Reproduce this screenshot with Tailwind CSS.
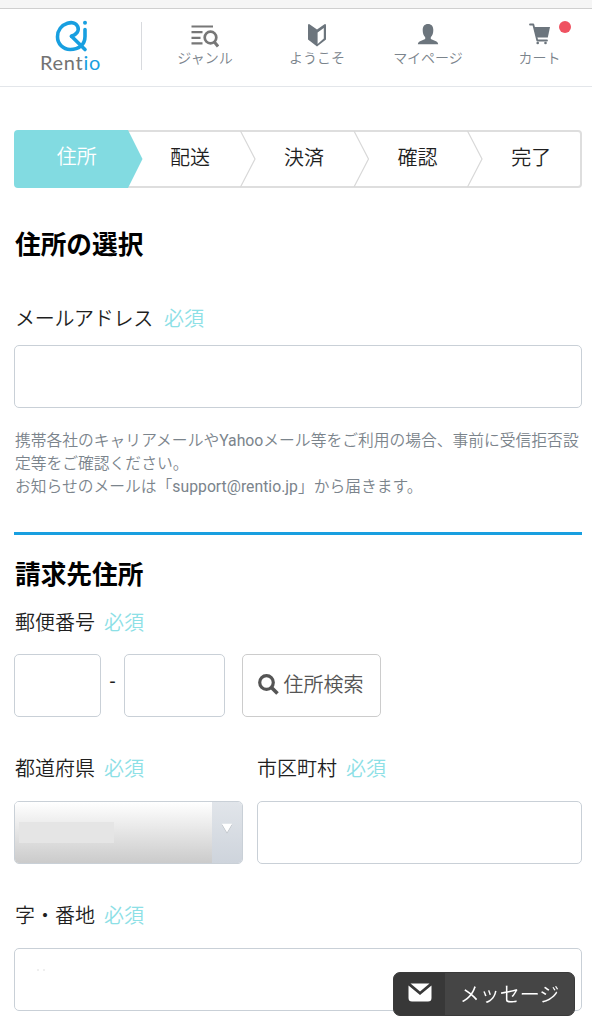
<!DOCTYPE html>
<html lang="ja">
<head>
    <meta charset="UTF-8">
    <meta name="viewport" content="width=device-width, initial-scale=1.0">
    <title>Rentio</title>
    <script src="https://cdn.jsdelivr.net/npm/@tailwindcss/browser@4"></script>
</head>
<body class="h-screen overflow-hidden bg-white text-[#1f1f1f] text-[20px] leading-[30px] font-[350] font-[Roboto,'Noto_Sans_CJK_JP',sans-serif]">

    <div class="h-[9px] bg-[#f5f5f5] border-b border-[#cfcfcf]"></div>

    <!-- Header -->
    <header class="flex h-[78px] border-b border-[#e3e6ea] text-[#7b848c]">
        <a href="#" class="w-[141px] flex flex-col items-center pt-[10px]">
            <svg class="shrink-0 w-[36px] h-[36px]" viewBox="0 0 36 36" fill="none" stroke="#189fe0" stroke-width="3.600" stroke-linecap="round" stroke-linejoin="round">
                <path d="M18.500 17.200C23 16 26.500 12 24.800 7.800C23 3.500 18.500 3 14.500 4.300C8.500 6.200 4.500 11.500 4.500 17.800C4.500 25 10 30.500 17.200 30.500C25.500 30.500 32 26 32 17.500V10.500"/>
                <path d="M18.500 17.200L32 30.500"/>
                <circle cx="32" cy="3.800" r="2" fill="#189fe0" stroke="none"/>
            </svg>
            <span class="-mt-[5px] h-[24px] text-[20px] leading-[24px] tracking-[0.7px] font-normal font-[Lato,sans-serif] text-[#737373]">Rent<span class="text-[#189fe0]">io</span></span>
        </a>
        <div class="w-px h-[48px] mt-[13px] bg-[#d8dade]"></div>
        <nav class="flex-1 grid grid-cols-[126px_98px_124px_99px] text-[14px] leading-[20px]">
            <a href="#" class="flex flex-col items-center pt-[14px]">
                <svg class="w-[28px] h-[25px]" viewBox="0 0 28 25" fill="none" stroke="#777" stroke-width="2.200">
                    <path d="M.5 3.500H22M.5 9.200H11.500M.5 14.800H9.500M.5 20.300H11.500"/>
                    <circle cx="19.500" cy="14.500" r="5.800" stroke-width="2.700"/>
                    <path d="M23 18.500L27 23.500" stroke-width="3"/>
                </svg>
                <span>ジャンル</span>
            </a>
            <a href="#" class="flex flex-col items-center pt-[14px]">
                <svg class="w-[18px] h-[25px]" viewBox="0 0 18 25" fill="#6c757d">
                    <path fill-rule="evenodd" d="M0 2.500Q0 .8 1.500 1.200L9 6.500L16.500 1.200Q18 .8 18 2.500V16.500L9 23.500L0 16.500ZM9.600 9.500V21L15.800 15.500V5Z"/>
                </svg>
                <span>ようこそ</span>
            </a>
            <a href="#" class="flex flex-col items-center pt-[14px]">
                <svg class="w-[22px] h-[25px]" viewBox="0 0 22 25" fill="#6c757d">
                    <path d="M11 1C14.500 1 16.300 3.200 16.300 7C16.300 10.500 15.500 12.500 13.800 14.200V16L19.500 18.500Q21.200 19.500 21.200 21.200H.8Q.8 19.500 2.500 18.500L8.200 16V14.200C6.500 12.500 5.700 10.500 5.700 7C5.700 3.200 7.500 1 11 1Z"/>
                </svg>
                <span>マイページ</span>
            </a>
            <a href="#" class="relative flex flex-col items-center pt-[14px]">
                <svg class="w-[22px] h-[25px]" viewBox="0 0 22 25" fill="#6c757d">
                    <path d="M1 1.500H4.300L8.300 17.500H18" fill="none" stroke="#6c757d" stroke-width="1.800" stroke-linecap="round" stroke-linejoin="round"/>
                    <path d="M4.800 4H21L18.800 14.500H7.500Z"/>
                    <circle cx="8.700" cy="20" r="1.300"/>
                    <circle cx="16.500" cy="20" r="1.300"/>
                </svg>
                <span>カート</span>
                <span class="absolute left-[69px] top-[12px] w-[12px] h-[12px] rounded-full bg-[#ef5261]"></span>
            </a>
        </nav>
    </header>

    <main class="pl-[14px] pr-[10px] pt-[43px]">
        <!-- Steps -->
        <ol class="relative grid grid-cols-5 h-[58px] text-[20px]">
            <li class="flex items-center justify-center pl-[12px] pb-[5px] bg-[#82dbe1] rounded-l text-white">住所</li>
            <li class="flex items-center justify-center pl-[11px] pb-[2px] border-y-2 border-[#dedede]">配送</li>
            <li class="flex items-center justify-center pl-[12px] pb-[2px] border-y-2 border-[#dedede]">決済</li>
            <li class="flex items-center justify-center pl-[12px] pb-[2px] border-y-2 border-[#dedede]">確認</li>
            <li class="flex items-center justify-center pl-[14px] pb-[2px] border-y-2 border-r-2 border-[#dedede] rounded-r">完了</li>
            <svg class="absolute inset-0 w-[568px] h-[58px]" viewBox="0 0 568 58" fill="none" stroke="#d8d8d8" stroke-width="1.200">
                <path d="M112 0H114L128.500 29L114 58H112Z" fill="#82dbe1" stroke="none"/>
                <path d="M226.500 1L241 29L226.500 57M340 1L354.500 29L340 57M453.500 1L468 29L453.500 57"/>
            </svg>
        </ol>

        <h1 class="mt-[38px] h-[38px] pl-px text-[25.7px] leading-[38px] font-bold text-black">住所の選択</h1>

        <form>
            <label class="block mt-[40px] pl-px"><span class="tracking-[-0.3px]">メールアドレス</span><span class="ml-[11px] text-[#8de0e6]">必須</span></label>
            <input type="email" class="block mt-[11px] w-full h-[63px] px-5 border border-[#c9d0d7] rounded-[5px]">

            <p class="mt-[21px] pl-px text-[15.78px] leading-[23.200px] text-[#7b848c] whitespace-nowrap">携帯各社のキャリアメールや<span class="font-normal">Yahoo</span>メール等をご利用の場合、事前に受信拒否設<br>定等をご確認ください。<br>お知らせのメールは「<span class="font-normal">support@rentio.jp</span>」から届きます。</p>

            <hr class="mt-[33px] border-t-[3px] border-[#189fe0]">

            <h2 class="mt-[21px] h-[38px] pl-px text-[25.7px] leading-[38px] font-bold text-black">請求先住所</h2>

            <label class="block mt-[14px] pl-px">郵便番号<span class="ml-[9px] text-[#8de0e6]">必須</span></label>
            <div class="flex mt-[16px]">
                <input type="text" class="w-[87px] h-[63px] border border-[#c9d0d7] rounded-[5px]">
                <span class="w-[23px] pt-[12px] text-center font-normal">-</span>
                <input type="text" class="w-[101px] h-[63px] border border-[#c9d0d7] rounded-[5px]">
                <button type="button" class="ml-[17px] w-[139px] h-[63px] pr-[2px] flex items-center justify-center gap-[5px] border border-[#ccc] rounded-[5px] text-[#555]">
                    <svg class="w-[21px] h-[21px] -mt-[2px]" viewBox="0 0 21 21" fill="none" stroke="#555" stroke-width="3.200">
                        <circle cx="8.500" cy="8.500" r="6.800"/>
                        <path d="M13.200 13.200L19.500 19.500" stroke-width="3.600"/>
                    </svg>
                    <span>住所検索</span>
                </button>
            </div>

            <div class="flex mt-[37px] gap-[14px]">
                <div class="w-[229px]">
                    <label class="block pl-px">都道府県<span class="ml-[9px] text-[#8de0e6]">必須</span></label>
                    <div class="mt-[17px] h-[63px] flex border border-[#c9d0d7] rounded-[5px] overflow-hidden">
                        <div class="flex-1 pt-[20px] pl-[4px] bg-linear-to-b from-white to-[#cbcbcb]">
                            <div class="w-[95px] h-[21px] bg-[#e5e5e5]"></div>
                        </div>
                        <div class="w-[30px] flex justify-center pt-[21px] bg-linear-to-b from-[#e1e5ea] to-[#ced4dc]">
                            <svg class="w-[12px] h-[11px]" viewBox="0 0 12 11">
                                <path d="M.8 1.800H11.200L6 10.500Z" fill="#b5bac0"/>
                                <path d="M.8 .8H11.200L6 9.500Z" fill="#fff"/>
                            </svg>
                        </div>
                    </div>
                </div>
                <div class="flex-1">
                    <label class="block">市区町村<span class="ml-[9px] text-[#8de0e6]">必須</span></label>
                    <input type="text" class="block mt-[17px] w-full h-[63px] border border-[#c9d0d7] rounded-[5px]">
                </div>
            </div>

            <label class="block mt-[37px] pl-px">字・番地<span class="ml-[9px] text-[#8de0e6]">必須</span></label>
            <div class="mt-[17px] h-[63px] pt-[20px] pl-[22px] flex gap-[4px] border border-[#c9d0d7] rounded-[5px]">
                <span class="w-[2px] h-[2px] bg-[#efefef]"></span>
                <span class="w-[2px] h-[2px] bg-[#efefef]"></span>
            </div>
        </form>
    </main>

    <!-- Message button -->
    <button class="fixed left-[393px] top-[972px] w-[182px] h-[44px] flex rounded-[7px] overflow-hidden bg-[#454545] border border-[#3a3a3a] text-white">
        <span class="w-[51px] h-full flex justify-center pt-[10px] bg-[#383838]">
            <svg class="w-[24px] h-[19px]" viewBox="0 0 24 19" fill="#fff">
                <path d="M2.500 .5H21.500L12 8.500Z"/>
                <path d="M.5 2.500L12 12L23.500 2.500V15Q23.500 18.500 20 18.500H4Q.5 18.500 .5 15Z"/>
            </svg>
        </span>
        <span class="flex-1 text-center leading-[44px]">メッセージ</span>
    </button>

</body>
</html>
